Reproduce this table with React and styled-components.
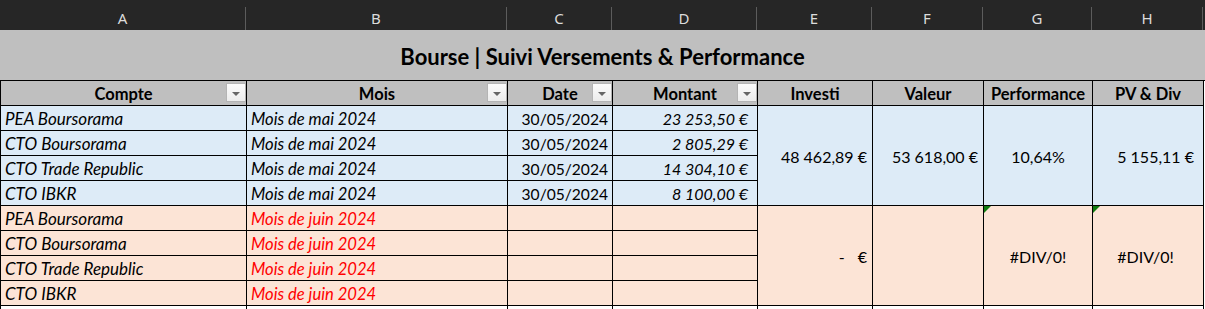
import styled, { createGlobalStyle } from "styled-components";

const COLS = "246px 261px 105px 145px 115px 111px 109px 111px";
const LETTERS = ["A", "B", "C", "D", "E", "F", "G", "H"];

const FILLS = {
  blue: "#ddebf7",
  orange: "#fce4d6",
  gray: "#bfbfbf",
  none: "#ffffff",
};

const groups = [
  {
    fill: "blue",
    month: "Mois de mai 2024",
    red: false,
    rows: [
      ["PEA Boursorama", "30/05/2024", "23 253,50 €"],
      ["CTO Boursorama", "30/05/2024", "2 805,29 €"],
      ["CTO Trade Republic", "30/05/2024", "14 304,10 €"],
      ["CTO IBKR", "30/05/2024", "8 100,00 €"],
    ],
    investi: "48 462,89 €",
    valeur: "53 618,00 €",
    perf: "10,64%",
    pv: "5 155,11 €",
    flagged: false,
  },
  {
    fill: "orange",
    month: "Mois de juin 2024",
    red: true,
    rows: [
      ["PEA Boursorama", "", ""],
      ["CTO Boursorama", "", ""],
      ["CTO Trade Republic", "", ""],
      ["CTO IBKR", "", ""],
    ],
    investi: null,
    valeur: "",
    perf: "#DIV/0!",
    pv: "#DIV/0!",
    flagged: true,
  },
];

const GlobalStyle = createGlobalStyle`
  html, body {
    margin: 0;
    padding: 0;
    background: #ffffff;
  }
  body {
    font-family: Lato, "Liberation Sans", sans-serif;
    color: #000000;
  }
`;

const Page = styled.div`
  width: 1205px;
  height: 309px;
  overflow: hidden;
  background: #ffffff;
`;

const ColumnBar = styled.div`
  display: grid;
  grid-template-columns: ${COLS} 1fr;
  height: 30px;
  background: #262626;
`;

const ColumnLetter = styled.div`
  margin-top: 7px;
  height: 23px;
  box-sizing: border-box;
  border-right: 1px solid ${(p) => (p.$last ? "transparent" : "#5c5c5c")};
  display: flex;
  justify-content: center;
  align-items: center;
  padding-bottom: 2px;
  font-family: "Noto Sans", "Open Sans", sans-serif;
  font-size: 15px;
  color: #dcdcdc;
`;

const Sheet = styled.div`
  display: grid;
  grid-template-columns: ${COLS};
  grid-template-rows: 51px;
  grid-auto-rows: 25px;
  width: 1204px;
  box-sizing: border-box;
  border-left: 1px solid #000000;
`;

const Title = styled.div`
  grid-column: 1 / -1;
  margin-left: -1px;
  margin-right: -1px;
  box-sizing: border-box;
  border-bottom: 1px solid #000000;
  background: #bfbfbf;
  display: flex;
  justify-content: center;
  align-items: center;
  padding-top: 3px;
  font-weight: 700;
  font-size: 22px;
`;

const Cell = styled.div`
  position: relative;
  box-sizing: border-box;
  border-right: 1px solid #000000;
  border-bottom: 1px solid #000000;
  background: ${(p) => FILLS[p.$fill || "none"]};
  grid-row: ${(p) => (p.$span ? `span ${p.$span}` : "auto")};
  display: flex;
  align-items: center;
  justify-content: ${(p) =>
    p.$align === "right" ? "flex-end" : p.$align === "center" ? "center" : "flex-start"};
  padding: 1px ${(p) => p.$pr ?? 4}px 0 4px;
  font-size: ${(p) => p.$size ?? 16}px;
  font-weight: ${(p) => (p.$bold ? 700 : 400)};
  font-style: ${(p) => (p.$italic ? "italic" : "normal")};
  color: ${(p) => (p.$red ? "#ff0000" : "#000000")};
  white-space: nowrap;
`;

const FilterButton = styled.span`
  position: absolute;
  top: 2px;
  right: 0;
  width: 20px;
  height: 19px;
  box-sizing: border-box;
  border: 1px solid #b4b4b4;
  background: linear-gradient(#fbfbfb, #ececec);
  display: flex;
  justify-content: center;
  align-items: center;
  padding-top: 2px;

  &::after {
    content: "";
    border-left: 4px solid transparent;
    border-right: 4px solid transparent;
    border-top: 4px solid #666666;
  }
`;

const ErrorFlag = styled.span`
  position: absolute;
  top: 0;
  left: 0;
  width: 0;
  height: 0;
  border-top: 7px solid #107c10;
  border-right: 7px solid transparent;
`;

const Dash = styled.span`
  margin-right: 13px;
`;

function HeaderCell({ children, filter }) {
  return (
    <Cell $fill="gray" $bold $align="center" $size={16.5}>
      {children}
      {filter && <FilterButton />}
    </Cell>
  );
}

function Group({ g }) {
  return g.rows.map((r, i) => [
    <Cell key={`a${i}`} $fill={g.fill} $italic $size={17}>
      {r[0]}
    </Cell>,
    <Cell key={`b${i}`} $fill={g.fill} $italic $red={g.red} $size={16.6}>
      {g.month}
    </Cell>,
    <Cell key={`c${i}`} $fill={g.fill} $align="right" $size={15.6}>
      {r[1]}
    </Cell>,
    <Cell key={`d${i}`} $fill={g.fill} $align="right" $italic $pr={9}>
      {r[2]}
    </Cell>,
    ...(i === 0
      ? [
          <Cell key="e" $fill={g.fill} $span={4} $align="right" $pr={5}>
            {g.investi === null ? (
              <>
                <Dash>-</Dash>€
              </>
            ) : (
              g.investi
            )}
          </Cell>,
          <Cell key="f" $fill={g.fill} $span={4} $align="right" $pr={5}>
            {g.valeur}
          </Cell>,
          <Cell key="g" $fill={g.fill} $span={4} $align="center">
            {g.flagged && <ErrorFlag />}
            {g.perf}
          </Cell>,
          <Cell key="h" $fill={g.fill} $span={4} $align={g.flagged ? "center" : "right"} $pr={9}>
            {g.flagged && <ErrorFlag />}
            {g.pv}
          </Cell>,
        ]
      : []),
  ]);
}

export default function App() {
  return (
    <Page>
      <GlobalStyle />
      <ColumnBar>
        {LETTERS.map((l) => (
          <ColumnLetter key={l}>{l}</ColumnLetter>
        ))}
        <ColumnLetter $last />
      </ColumnBar>
      <Sheet>
        <Title>Bourse | Suivi Versements &amp; Performance</Title>
        <HeaderCell filter>Compte</HeaderCell>
        <HeaderCell filter>Mois</HeaderCell>
        <HeaderCell filter>Date</HeaderCell>
        <HeaderCell filter>Montant</HeaderCell>
        <HeaderCell>Investi</HeaderCell>
        <HeaderCell>Valeur</HeaderCell>
        <HeaderCell>Performance</HeaderCell>
        <HeaderCell>PV &amp; Div</HeaderCell>
        {groups.map((g) => (
          <Group key={g.month} g={g} />
        ))}
        {LETTERS.map((l) => (
          <Cell key={`empty${l}`} />
        ))}
      </Sheet>
    </Page>
  );
}
